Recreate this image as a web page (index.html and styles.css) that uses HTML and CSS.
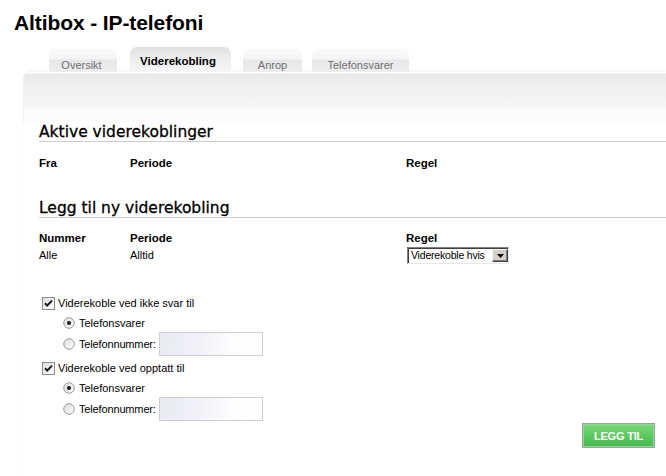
FILE: index.html
```html
<!DOCTYPE html>
<html lang="no">
<head>
<meta charset="utf-8">
<title>Altibox - IP-telefoni</title>
<link rel="stylesheet" href="styles.css">
</head>
<body>
<h1 class="title">Altibox - IP-telefoni</h1>
<nav class="tabs">
  <a class="tab tab-oversikt">Oversikt</a>
  <a class="tab tab-active">Viderekobling</a>
  <a class="tab tab-anrop">Anrop</a>
  <a class="tab tab-svar">Telefonsvarer</a>
</nav>
<main class="panel">
  <div class="panel-head"></div>
  <div class="panel-body">
    <h2 class="section-title">Aktive viderekoblinger</h2>
    <div class="cols col-head first-head">
      <span>Fra</span><span>Periode</span><span>Regel</span>
    </div>

    <h2 class="section-title second-title">Legg til ny viderekobling</h2>
    <div class="cols col-head second-head">
      <span>Nummer</span><span>Periode</span><span>Regel</span>
    </div>
    <div class="cols data-row">
      <span>Alle</span><span>Alltid</span>
      <div class="select">
        <span class="select-value">Viderekoble hvis</span>
        <span class="select-btn"><svg width="7" height="4" viewBox="0 0 7 4"><path d="M0 0h7L3.5 4z" fill="#000"/></svg></span>
      </div>
    </div>

    <div class="options">
      <div class="opt cb-row">
        <span class="check"><svg width="13" height="13" viewBox="0 0 13 13"><defs><linearGradient id="cbg" x1="0" y1="0" x2="1" y2="1"><stop offset="0" stop-color="#dcdcdc"/><stop offset="1" stop-color="#fff"/></linearGradient></defs><rect x="0.5" y="0.5" width="12" height="12" fill="url(#cbg)" stroke="#8c8c8c"/><path d="M3 6.2l2.2 2.3L10 3.6" fill="none" stroke="#1a1a1a" stroke-width="2"/></svg></span>
        <span>Viderekoble ved ikke svar til</span>
      </div>
      <div class="opt radio-row">
        <span class="radio"><svg width="12" height="12" viewBox="0 0 12 12"><defs><linearGradient id="rbg" x1="0" y1="0" x2="1" y2="1"><stop offset="0" stop-color="#d8d8d8"/><stop offset="1" stop-color="#fff"/></linearGradient></defs><circle cx="6" cy="6" r="5.3" fill="url(#rbg)" stroke="#9c9c9c"/><circle cx="6" cy="6" r="2" fill="#1a1a1a"/></svg></span>
        <span>Telefonsvarer</span>
      </div>
      <div class="opt radio-row input-row">
        <span class="radio"><svg width="12" height="12" viewBox="0 0 12 12"><circle cx="6" cy="6" r="5.3" fill="url(#rbg)" stroke="#9c9c9c"/></svg></span>
        <span class="num-label">Telefonnummer:</span>
        <span class="text-input"></span>
      </div>
      <div class="opt cb-row cb-second">
        <span class="check"><svg width="13" height="13" viewBox="0 0 13 13"><rect x="0.5" y="0.5" width="12" height="12" fill="url(#cbg)" stroke="#8c8c8c"/><path d="M3 6.2l2.2 2.3L10 3.6" fill="none" stroke="#1a1a1a" stroke-width="2"/></svg></span>
        <span>Viderekoble ved opptatt til</span>
      </div>
      <div class="opt radio-row">
        <span class="radio"><svg width="12" height="12" viewBox="0 0 12 12"><circle cx="6" cy="6" r="5.3" fill="url(#rbg)" stroke="#9c9c9c"/><circle cx="6" cy="6" r="2" fill="#1a1a1a"/></svg></span>
        <span>Telefonsvarer</span>
      </div>
      <div class="opt radio-row input-row">
        <span class="radio"><svg width="12" height="12" viewBox="0 0 12 12"><circle cx="6" cy="6" r="5.3" fill="url(#rbg)" stroke="#9c9c9c"/></svg></span>
        <span class="num-label">Telefonnummer:</span>
        <span class="text-input"></span>
      </div>
    </div>

    <div class="actions">
      <button class="btn-add">LEGG TIL</button>
    </div>
  </div>
</main>
</body>
</html>
```

FILE: styles.css
```css
html, body {
  margin: 0;
  padding: 0;
  background: #fff;
}
body {
  font-family: "Liberation Sans", Arial, sans-serif;
  font-size: 11px;
  color: #000;
  overflow: hidden;
}
.title {
  margin: 0;
  padding: 11px 0 0 14px;
  font-family: "Liberation Sans", Arial, sans-serif;
  font-weight: bold;
  font-size: 21px;
  line-height: 24px;
  letter-spacing: -0.1px;
  color: #000;
}
.tabs {
  display: flex;
  align-items: flex-end;
  margin: 12px 0 0 49px;
  height: 25px;
}
.tab {
  box-sizing: border-box;
  height: 22px;
  padding-top: 9px;
  line-height: 13px;
  font-size: 11px;
  text-align: center;
  color: #6f6f6f;
  border-radius: 5px 5px 0 0;
  background: linear-gradient(to bottom, #fafafb 0, #f4f4f6 40%, #e7e7e9 46%, #eeeef0 100%);
  box-shadow: 0 -1px 1px rgba(0,0,0,0.03);
}
.tab-oversikt { width: 68px; padding-right: 3px; }
.tab-active {
  width: 101px;
  height: 25px;
  margin-left: 13px;
  padding-top: 8px;
  padding-right: 5px;
  font-weight: bold;
  font-size: 11.5px;
  color: #000;
  border-radius: 7px 7px 0 0;
  background: linear-gradient(to bottom, #e1e1e3 0, #ebebed 40%, #f6f6f8 100%);
}
.tab-anrop { width: 59px; margin-left: 12px; }
.tab-svar { width: 97px; margin-left: 10px; }

.panel {
  display: block;
  margin-left: 24px;
  border-top-left-radius: 6px;
  background: #fff;
  height: 404px;
  box-shadow: 0 -2px 2px rgba(0,0,0,0.03);
}
.panel-head {
  height: 51px;
  border-top-left-radius: 6px;
  box-shadow: -1px 0 1px rgba(0,0,0,0.05);
  background: linear-gradient(to bottom, #ffffff 0, #ffffff 1px, #e9e9eb 2px, #efeef1 14px, #f4f3f6 30px, #f6f5f7 36px, #fcfafc 37px, #fdfbfd 50px, #fff 51px);
}
.panel-body {
  padding-left: 15px;
}
.section-title {
  margin: 0;
  font-family: "DejaVu Sans", Verdana, sans-serif;
  font-weight: normal;
  font-size: 15.5px;
  line-height: 18px;
  color: #000;
  -webkit-text-stroke: 0.3px #000;
  border-bottom: 1px solid #cdcdcd;
}
.second-title { margin-top: 29px; }
.cols {
  display: grid;
  grid-template-columns: 91px 276px 1fr;
}
.col-head {
  font-weight: bold;
  font-size: 11.5px;
  line-height: 14px;
  color: #000;
}
.first-head { margin-top: 14px; }
.second-head { margin-top: 13px; }
.data-row {
  margin-top: 1px;
  height: 18px;
  line-height: 18px;
  font-size: 11px;
}
.select {
  box-sizing: border-box;
  width: 102px;
  height: 17px;
  margin-top: 1px;
  margin-left: 1px;
  display: flex;
  border-top: 1px solid #808080;
  border-left: 1px solid #808080;
  border-right: 1px solid #e8e8e8;
  border-bottom: 1px solid #e8e8e8;
  box-shadow: inset 1px 1px 0 #404040;
  background: #fff;
}
.select-value {
  flex: 1;
  padding-left: 3px;
  font-size: 10.5px;
  line-height: 14px;
  letter-spacing: -0.2px;
  color: #000;
  white-space: nowrap;
  overflow: hidden;
}
.select-btn {
  box-sizing: border-box;
  width: 16px;
  height: 13px;
  margin: 1px 0 0 0;
  background: #d4d0c8;
  border-top: 1px solid #f4f4f4;
  border-left: 1px solid #f4f4f4;
  border-right: 1px solid #404040;
  border-bottom: 1px solid #404040;
  box-shadow: inset -1px -1px 0 #808080;
  display: flex;
  align-items: center;
  justify-content: center;
}
.options {
  margin-top: 29px;
  padding-left: 3px;
}
.opt {
  display: flex;
  align-items: center;
  height: 20px;
  font-size: 11px;
  color: #000;
}
.check {
  width: 13px;
  height: 13px;
  margin-right: 3px;
  display: flex;
}
.cb-second { margin-top: 2px; }
.radio-row {
  height: 19px;
  padding-left: 21px;
}
.radio {
  width: 12px;
  height: 12px;
  margin-right: 4px;
  display: flex;
}
.num-label { letter-spacing: -0.15px; }
.input-row { height: 24px; }
.text-input {
  box-sizing: border-box;
  width: 104px;
  height: 24px;
  margin-left: 3px;
  border: 1px solid #cfcfcf;
  background: linear-gradient(100deg, #e8eaf2 0, #f1f2f8 40%, #fdfdff 70%, #fff 100%);
}
.actions {
  display: flex;
  justify-content: flex-end;
  padding-right: 11px;
  margin-top: 2px;
}
.btn-add {
  box-sizing: border-box;
  width: 73px;
  height: 25px;
  padding: 0;
  border: 1px solid #9aa59a;
  box-shadow: inset 0 0 0 1px #8fd88f;
  background: linear-gradient(to bottom, #7ad97a 0, #5fcb63 45%, #45b84f 100%);
  color: #fff;
  font-family: "Liberation Sans", Arial, sans-serif;
  font-weight: bold;
  font-size: 11px;
  letter-spacing: -0.2px;
  cursor: pointer;
}
```
